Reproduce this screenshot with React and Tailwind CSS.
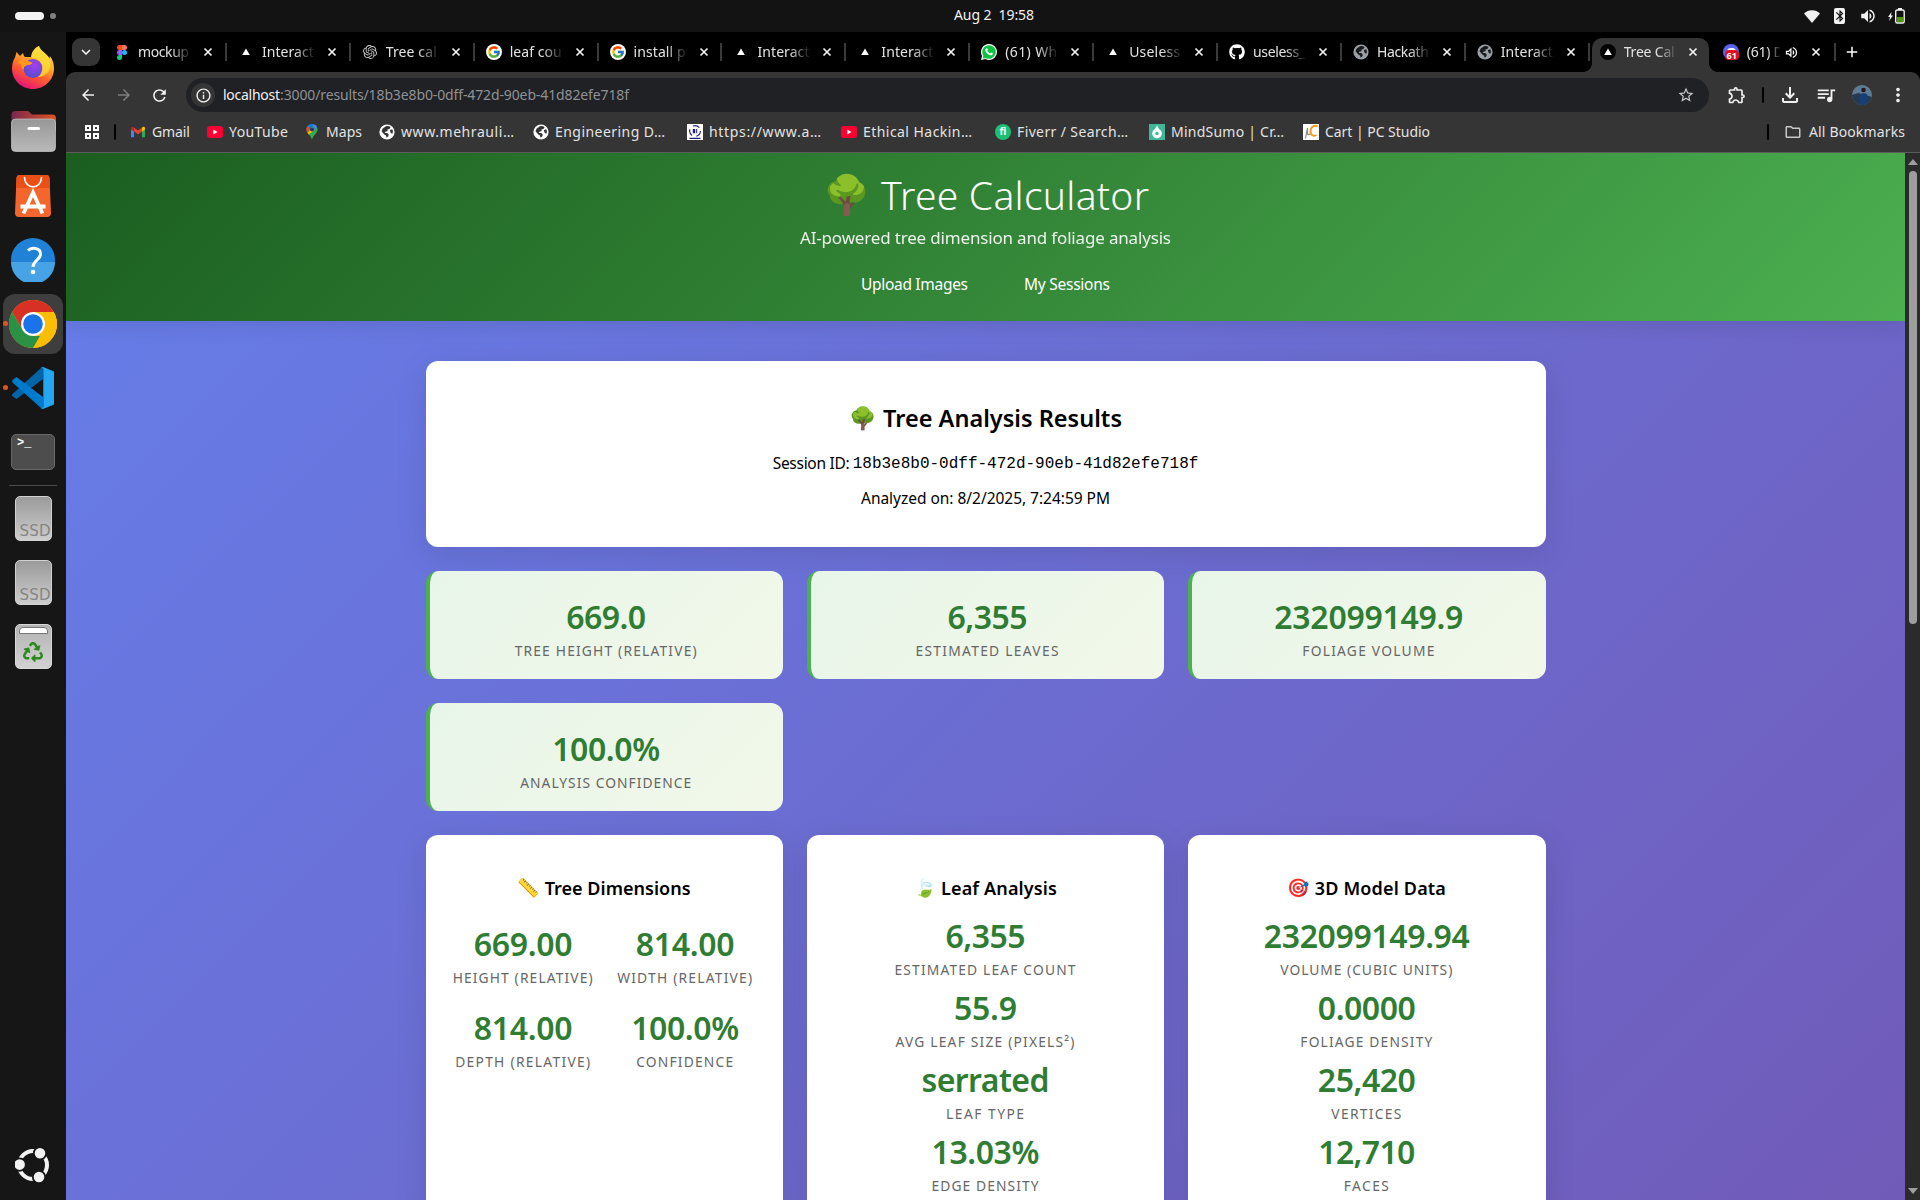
import React, { useLayoutEffect, useRef, useState } from "react";
import { FcGoogle } from "react-icons/fc";
import { FaGithub, FaRecycle } from "react-icons/fa";
import { SiOpenai } from "react-icons/si";
import {
  MdArrowBack,
  MdArrowForward,
  MdRefresh,
  MdInfoOutline,
  MdStarBorder,
  MdOutlineExtension,
  MdOutlineFileDownload,
  MdQueueMusic,
  MdMoreVert,
  MdOutlineFolder,
  MdOutlineVolumeUp,
  MdVolumeUp,
  MdAdd,
  MdKeyboardArrowDown,
  MdBluetooth,
} from "react-icons/md";

/* Text whose tracking is adjusted so that it takes exactly `w` pixels. */
function Fit({ w, className = "", children }) {
  const ref = useRef(null);
  const [sp, setSp] = useState(0);
  useLayoutEffect(() => {
    const n = Array.from(children).length;
    const natural = ref.current.getBoundingClientRect().width - sp * n;
    setSp((w - natural) / Math.max(1, n - 1));
  }, [w, children]);
  return (
    <span ref={ref} className={`inline-block whitespace-pre ${className}`} style={{ letterSpacing: sp, marginRight: -sp }}>
      {children}
    </span>
  );
}

/* ---------- favicons ---------- */
const Figma = () => (
  <svg viewBox="0 0 10 15" className="h-[15px] w-[10px]">
    <path d="M2.5 0H5v5H2.5a2.5 2.5 0 0 1 0-5z" fill="#f24e1e" />
    <path d="M5 0h2.5a2.5 2.5 0 0 1 0 5H5z" fill="#ff7262" />
    <path d="M2.5 5H5v5H2.5a2.5 2.5 0 0 1 0-5z" fill="#a259ff" />
    <circle cx="7.5" cy="7.5" r="2.5" fill="#1abcfe" />
    <path d="M2.5 10H5v2.5A2.5 2.5 0 1 1 2.5 10z" fill="#0acf83" />
  </svg>
);
const Triangle = () => (
  <svg viewBox="0 0 16 16" className="size-4">
    <circle cx="8" cy="8" r="8" fill="#000" />
    <path d="M8 4.4 11.8 11H4.2z" fill="#fff" />
  </svg>
);
const Google = () => (
  <span className="flex size-4 items-center justify-center rounded-full bg-white">
    <FcGoogle className="size-[14px]" />
  </span>
);
const WhatsApp = () => (
  <svg viewBox="0 0 16 16" className="size-4">
    <path d="M8 0a8 8 0 0 1 0 16 8 8 0 0 1-3.7-.9L0 16l1-4.1A8 8 0 0 1 8 0z" fill="#fff" />
    <path d="M8 1.2a6.8 6.8 0 1 1-3.4 12.7l-3 .7.8-2.8A6.8 6.8 0 0 1 8 1.2z" fill="#0dc143" />
    <path d="M5.6 4.2c.5-.2.8 0 1 .6l.4 1c0 .4-.6.8-.6 1 .6 1.300 1.500 2.100 2.700 2.600.4 0 .7-.9 1.100-.8l1.500.7c.3.2.1 1.200-.5 1.700-2.400 1.500-6.800-2-7-5 .1-.9.7-1.600 1.400-1.800z" fill="#fff" />
  </svg>
);
const Globe = ({ fg = "#9aa0a6", bg = "#1b1b1b" }) => (
  <svg viewBox="0 0 16 16" className="size-4">
    <circle cx="8" cy="8" r="7.600" fill={fg} />
    <path d="M7 2.200c1.500-.6 3.300-.3 4.600.7L10.500 5l-2 .5v1.700l-1.800.3-1 1.500 2.500.1 1.500 1.400-.3 1.800-1.800 1.400-.6-2.200-1.700-1-2.800-3.200 1.200-2.800z" fill={bg} />
    <path d="m10.800 6 2.500-.7.700 2.300-.7 2.200-1.500-.7z" fill={bg} />
  </svg>
);
const Discord = () => (
  <span className="relative block size-4 rounded-full bg-[#5865f2]">
    <span className="absolute top-[4px] left-[4px] h-[4px] w-[9px] rounded-t bg-white" />
    <span className="absolute right-0 bottom-0 flex h-[10px] w-[14px] items-center justify-center rounded-[4px] bg-[#e0101f] text-[9px] leading-none font-bold text-white">61</span>
  </span>
);
const Gmail = () => (
  <svg viewBox="0 0 16 12" className="h-3 w-[14px]">
    <path d="M0 1.500V11a1 1 0 0 0 1 1h2.500V4z" fill="#4285f4" />
    <path d="M16 1.500V11a1 1 0 0 1-1 1h-2.500V4z" fill="#34a853" />
    <path d="M12.500 4V.9C14.300-.6 16-.2 16 1.800V3l-3.500 2.600z" fill="#fbbc04" />
    <path d="M3.500 5.300V1L8 4.400 12.500 1v4.300L8 8.700z" fill="#ea4335" />
    <path d="M3.500 1C1.700-.6 0-.2 0 1.800V3l3.500 2.600z" fill="#c5221f" />
  </svg>
);
const YouTube = () => (
  <svg viewBox="0 0 16 12" className="h-3 w-4">
    <rect width="16" height="12" rx="3" fill="#ff0033" />
    <path d="M6.300 3.500 10.500 6 6.300 8.500z" fill="#fff" />
  </svg>
);
const MapsPin = () => (
  <svg viewBox="0 0 12 16" className="h-4 w-4">
    <path d="M6 0a5.600 5.600 0 0 1 5.600 5.600C11.600 9.500 7.500 10.500 6 16 4.500 10.500.4 9.500.4 5.600A5.600 5.600 0 0 1 6 0z" fill="#34a853" />
    <path d="M1.700 2.100 4.500 4.500 1.600 8.800C.8 7.900.4 6.900.4 5.600c0-1.400.5-2.600 1.300-3.500z" fill="#ea4335" />
    <path d="M1.700 2.100A5.600 5.600 0 0 1 7.800.3L4.500 4.500z" fill="#1a73e8" />
    <path d="M7.800.3a5.600 5.600 0 0 1 3.200 2.900L7.500 7z" fill="#4285f4" />
    <path d="m7.500 7-5 3.500L1.600 8.800 4.300 6z" fill="#fbbc04" />
    <circle cx="6" cy="5.500" r="2" fill="#2b3a55" />
  </svg>
);
const BLogo = () => (
  <svg viewBox="0 0 16 16" className="size-4">
    <rect width="16" height="16" fill="#fff" />
    <circle cx="8" cy="7" r="5.400" fill="none" stroke="#2a2a8c" strokeWidth="1.200" strokeDasharray="7 4.300" />
    <path d="M5.800 5h2.400v4.200H5.800zM9.200 5h1v4.200h-1zM2.500 13.800h11V15h-11z" fill="#1d1d7a" />
  </svg>
);
const Fiverr = () => (
  <span className="flex size-4 items-center justify-center rounded-full bg-[#1dbf73] pb-px text-[10px] leading-none font-bold text-white">fi</span>
);
const MindSumo = () => (
  <svg viewBox="0 0 16 16" className="size-4">
    <rect width="16" height="16" fill="#3fb89a" />
    <circle cx="8" cy="9.500" r="4.800" fill="#fff" />
    <path d="M8 1.500 10 5H6z" fill="#fff" />
    <circle cx="8" cy="9.500" r="1.700" fill="#3fb89a" />
  </svg>
);
const Cart = () => (
  <svg viewBox="0 0 16 16" className="size-4">
    <rect width="16" height="16" fill="#fff" />
    <path d="M2.500 14.500 4.500 4v6c1.500 1.500 3 0 3.500-2" fill="none" stroke="#888" strokeWidth="1.200" />
    <path d="M14.500 2.500C11 .3 7 3.500 7.500 8c.3 3.300 3.500 4.500 6 3" fill="none" stroke="#f39a1f" strokeWidth="2" />
  </svg>
);

/* ---------- dock ---------- */
const Firefox = () => (
  <svg viewBox="0 0 42 43" className="-mt-[2px] h-[43px] w-[42px]">
    <defs>
      <linearGradient id="ffa" x1=".8" y1="0" x2=".3" y2="1">
        <stop offset="0" stopColor="#fff14a" />
        <stop offset=".35" stopColor="#ffb329" />
        <stop offset=".65" stopColor="#ff5a30" />
        <stop offset="1" stopColor="#e3107d" />
      </linearGradient>
      <radialGradient id="ffb" cx=".6" cy=".3" r=".8">
        <stop offset="0" stopColor="#a43df0" />
        <stop offset="1" stopColor="#4a50c8" />
      </radialGradient>
    </defs>
    <path d="M27 0c1 5 8 7 10.500 12.500.5-1 .4-2 0-3C41 14 42 18 42 22.500 42 34 32.500 43 21 43S0 34 0 22.500C0 18 1 14.500 3 11.500L4.500 6l3.500 4 3-3c.5 2 1 3 2 4h6c.5-5 3.500-9 8-11z" fill="url(#ffa)" />
    <circle cx="21" cy="22.500" r="9.500" fill="url(#ffb)" />
    <path d="M5.500 16c5-2.500 9-2.500 15 .8-1.500 2.200-3 2.400-5.500 2.400-3 .8-3.500 2.500-3 4.500-2-1-3-3.500-2.500-5.200z" fill="#ff9a1f" />
    <path d="M27 0c-6 4-8 8-7 12 5 0 9 3 10 7 1 5-1 10-4 12 9 0 14-8 12-17C36 9 28 5 27 0z" fill="#ffdf3a" opacity=".75" />
  </svg>
);
const Files = () => (
  <svg viewBox="0 0 45 41" className="-mt-px h-[41px] w-[45px]">
    <defs>
      <linearGradient id="fa">
        <stop offset="0" stopColor="#78284f" />
        <stop offset="1" stopColor="#e2521f" />
      </linearGradient>
      <linearGradient id="fb" x2="0" y2="1">
        <stop offset="0" stopColor="#979797" />
        <stop offset="1" stopColor="#b9b9b9" />
      </linearGradient>
    </defs>
    <path d="M.5 4a4 4 0 0 1 4-4H17l4 3.500h20a4 4 0 0 1 4 4V20H.5z" fill="url(#fa)" />
    <rect x=".5" y="8" width="44" height="32.500" rx="4" fill="url(#fb)" stroke="#c8c8c8" strokeWidth=".7" />
    <rect x="16.500" y="16" width="12.500" height="3" rx="1.500" fill="#fff" />
  </svg>
);
const AppCenter = () => (
  <svg viewBox="0 0 36 42" className="h-[42px] w-[36px]">
    <path d="M5 0h26a3.500 3.500 0 0 1 3.500 3.300L36 38a4 4 0 0 1-4 4H4a4 4 0 0 1-4-4L1.500 3.300A3.500 3.500 0 0 1 5 0z" fill="#f5662c" />
    <path d="M1.500 3.300A3.500 3.500 0 0 1 5 0h26a3.500 3.500 0 0 1 3.500 3.300L35 13H1z" fill="#ea4f16" />
    <path d="M9.500 2.500c.5 12.500 16.500 12.500 17 0" fill="none" stroke="#fff" strokeWidth="1.600" strokeLinecap="round" />
    <path d="M8.500 38.500 18 17.500l9.500 21M5.500 31.500h25" fill="none" stroke="#fff" strokeWidth="3.800" />
  </svg>
);
const Help = () => (
  <svg viewBox="0 0 44 44" className="size-11">
    <circle cx="22" cy="22" r="22" fill="#1f82d6" />
    <path d="M0 24h44a22 22 0 0 1-44 0z" fill="#46a4e6" />
    <path d="M17 12.500c3.500-3.500 12.500-2.800 12.500 3.500 0 6-7.500 6.500-7.500 13" fill="none" stroke="#fff" strokeWidth="3" />
    <circle cx="22" cy="34" r="2.300" fill="#fff" />
  </svg>
);
const Chrome = () => (
  <svg viewBox="0 0 48 48" className="size-12">
    <circle cx="24" cy="24" r="24" fill="#fbbc04" />
    <path d="M24 24 13.600 30 3.200 12A24 24 0 0 1 44.800 12H24z" fill="#d93025" />
    <path d="M3.200 12 13.600 30 24 36h10.400L24 48A24 24 0 0 1 3.200 12z" fill="#2a9145" />
    <path d="M44.800 12A24 24 0 0 1 24 48l10.400-18V12z" fill="#fbbc04" />
    <circle cx="24" cy="24" r="12" fill="#fff" />
    <circle cx="24" cy="24" r="9.800" fill="#1a73e8" />
  </svg>
);
const VSCode = () => (
  <svg viewBox="0 0 42 42" className="size-[42px]">
    <path d="M0 27.500 29 1l2 0v11L4.500 32 0 29z" fill="#0065a9" />
    <path d="M0 14.500 1 12.500 4.500 10 31 30v11h-2L1 16z" fill="#007acc" />
    <path d="M31 0 42 4.500v33L31 42c-1 0-2-.5-2.500-1.200 1 .6 2.800.3 2.800-1.600V2.800c0-1.800-1.700-2.400-2.800-1.600C29 .4 30 0 31 0z" fill="#24a6f2" />
  </svg>
);
const Terminal = () => (
  <span className="block h-9 w-11 rounded-[5px] border border-[#686868] bg-[#4d4d4d] pl-[5px] font-['Liberation_Mono'] text-[12px] leading-[17px] font-bold text-white">&gt;_</span>
);
const Ssd = () => (
  <span className="flex h-[45px] w-[37px] items-end justify-end rounded-[5px] border border-[#d2d2d2] bg-linear-to-b from-[#9b9b9b] to-[#cdcdcd] font-['DejaVu_Sans'] text-[15px] leading-[17px] text-[#858585]">
    <Fit w={31}>SSD</Fit>
  </span>
);
const Trash = () => (
  <span className="flex h-[45px] w-[37px] flex-col items-center rounded-[5px] border border-[#d8d8d8] bg-linear-to-b from-[#b3b3b3] to-[#d2d2d2] pt-[2px]">
    <span className="h-[7px] w-[29px] rounded-t border border-[#777] bg-white" />
    <FaRecycle className="mt-[8px] size-5 text-[#2b8a1c]" />
  </span>
);
const UbuntuLogo = () => (
  <svg viewBox="0 0 36 36" className="size-9">
    <circle cx="18" cy="18" r="14" fill="none" stroke="#f2f2f2" strokeWidth="4" />
    <g fill="#f2f2f2" stroke="#161616" strokeWidth="1.800">
      <circle cx="25" cy="6.200" r="6.200" />
      <circle cx="4.600" cy="17.600" r="6.200" />
      <circle cx="24" cy="30" r="6.200" />
    </g>
  </svg>
);

const DockItem = ({ children, active, running }) => (
  <div className="relative flex h-16 items-center justify-center">
    {running && <span className="absolute top-[29px] left-[3px] z-10 size-[5px] rounded-full bg-[#e25322]" />}
    <div className={active ? "flex size-[60px] items-center justify-center rounded-xl bg-[#3e3e3e]" : "flex"}>{children}</div>
  </div>
);

/* ---------- browser chrome ---------- */
const tabs = [
  ["mockup", <Figma />, 51],
  ["Interact", <Triangle />, 52],
  ["Tree cal", <SiOpenai className="size-[14px] text-[#c8c8c8]" />, 51],
  ["leaf cou", <Google />, 52],
  ["install p", <Google />, 52],
  ["Interact", <Triangle />, 52],
  ["Interact", <Triangle />, 52],
  ["(61) Wh", <WhatsApp />, 52],
  ["Useless", <Triangle />, 51],
  ["useless_", <FaGithub className="size-4 text-white" />, 52],
  ["Hackath", <Globe />, 52],
  ["Interact", <Globe />, 52],
];

const Close = ({ className }) => (
  <svg viewBox="0 0 14 14" className={`size-[14px] ${className}`}>
    <path d="m3.500 3.500 7 7m0-7-7 7" stroke="#f1f1f1" strokeWidth="1.700" fill="none" />
  </svg>
);

const Tab = ({ title, icon, w }) => (
  <div className="flex h-7 w-[123.9px] items-center pl-[11px]">
    <span className="flex w-4 justify-center">{icon}</span>
    <span className="ml-[8px] h-5 w-[54px] overflow-hidden mask-r-from-60% leading-5"><Fit w={w}>{title}</Fit></span>
    <Close className="ml-[9px]" />
    <span className="ml-auto h-[18px] w-[2px] bg-[#3a3a3a]" />
  </div>
);

const bookmarks = [
  ["Gmail", <Gmail />, 38, "w-[77px]"],
  ["YouTube", <YouTube />, 59, "w-[97px]"],
  ["Maps", <MapsPin />, 36, "w-[75px]"],
  ["www.mehrauli…", <Globe fg="#fff" bg="#353535" />, 113, "w-[154px]"],
  ["Engineering D…", <Globe fg="#fff" bg="#353535" />, 110, "w-[154px]"],
  ["https://www.a…", <BLogo />, 112, "w-[154px]"],
  ["Ethical Hackin…", <YouTube />, 109, "w-[154px]"],
  ["Fiverr / Search…", <Fiverr />, 111, "w-[154px]"],
  ["MindSumo | Cr…", <MindSumo />, 113, "w-[154px]"],
  ["Cart | PC Studio", <Cart />, 105, "w-[154px]"],
];

function Browser() {
  return (
    <div className="shrink-0 text-[14px] text-[#e3e3e3]">
      <div className="flex h-10 items-center bg-black pl-[6px]">
        <span className="mr-[3px] flex size-7 items-center justify-center rounded-[9px] bg-[#353535]"><MdKeyboardArrowDown className="size-[18px] text-white" /></span>
        {tabs.map((t, i) => <Tab key={i} title={t[0]} icon={t[1]} w={t[2]} />)}
        <div className="relative mt-[6px] ml-[2px] flex h-[34px] w-[117px] items-center rounded-t-[10px] bg-[#353535] pb-[6px] pl-2">
          <span className="absolute bottom-0 -left-[10px] size-[10px] bg-[radial-gradient(circle_at_0_0,transparent_10px,#353535_10.5px)]" />
          <span className="absolute -right-[10px] bottom-0 size-[10px] bg-[radial-gradient(circle_at_100%_0,transparent_10px,#353535_10.5px)]" />
          <Triangle />
          <span className="ml-[8px] h-5 w-[54px] overflow-hidden mask-r-from-60% leading-5"><Fit w={51}>Tree Cal</Fit></span>
          <Close className="ml-[8px]" />
        </div>
        <div className="flex h-7 items-center pl-[14px]">
          <Discord />
          <span className="ml-[8px] h-5 w-[38px] overflow-hidden mask-r-from-55% mask-r-to-90% leading-5"><Fit w={37}>(61) D</Fit></span>
          <MdOutlineVolumeUp className="-ml-px size-[15px] text-white" />
          <Close className="ml-[10px]" />
          <span className="ml-[11px] h-[18px] w-[2px] bg-[#3a3a3a]" />
          <MdAdd className="ml-[7px] size-[18px] text-white" />
        </div>
      </div>
      <div className="bg-black">
        <div className="flex h-[46px] items-center rounded-t-[9px] bg-[#353535] text-[#f1f1f1]">
          <MdArrowBack className="ml-[13px] size-[18px]" />
          <MdArrowForward className="ml-[18px] size-[18px] text-[#7d7d7d]" />
          <MdRefresh className="ml-[17px] size-[19px]" />
          <div className="ml-[17px] flex h-[34px] w-[1523px] items-center rounded-full bg-[#202124] pl-[5px]">
            <span className="flex size-6 items-center justify-center rounded-full bg-[#353535]"><MdInfoOutline className="size-[17px]" /></span>
            <span className="-mt-[2px] ml-2 flex">
              <Fit w={57}>localhost</Fit>
              <Fit w={349} className="text-[#8f9195]">:3000/results/18b3e8b0-0dff-472d-90eb-41d82efe718f</Fit>
            </span>
            <MdStarBorder className="mr-[14px] ml-auto size-[18px] text-[#c7c7c7]" />
          </div>
          <MdOutlineExtension className="ml-[18px] size-[20px]" />
          <span className="ml-[15px] h-4 w-[2px] rounded bg-black" />
          <MdOutlineFileDownload className="ml-[14px] size-[24px]" />
          <MdQueueMusic className="ml-[13px] size-[22px]" />
          <svg viewBox="0 0 20 20" className="ml-[15px] size-5">
            <defs><clipPath id="av"><circle cx="10" cy="10" r="10" /></clipPath></defs>
            <g clipPath="url(#av)">
              <rect width="20" height="20" fill="#5f7b94" />
              <path d="M0 10 6 8l14 4v8H0z" fill="#26394e" />
              <circle cx="11.500" cy="5" r="2.300" fill="#22191a" />
              <path d="M7.500 20V10c1-2.500 7-2.500 8 0v10z" fill="#173f75" />
            </g>
          </svg>
          <MdMoreVert className="ml-[15px] size-[22px]" />
        </div>
      </div>
      <div className="flex h-[35px] items-center border-b border-[#5c5c5c] bg-[#353535]">
        <div className="flex h-full w-full items-center pb-[7px]">
          <svg viewBox="0 0 16 16" className="ml-[18px] size-4 fill-none stroke-white stroke-2">
            <path d="M2 2h4v4H2zM10 2h4v4h-4zM2 10h4v4H2zM10 10h4v4h-4z" />
          </svg>
          <span className="mr-[14px] ml-[14px] h-4 w-[2px] rounded bg-black" />
          {bookmarks.map((b, i) => (
            <span key={i} className={`flex shrink-0 items-center ${b[3]}`}>
              <span className="mr-[6px] flex w-4 justify-center">{b[1]}</span>
              <span className="-mt-px"><Fit w={b[2]}>{b[0]}</Fit></span>
            </span>
          ))}
          <span className="ml-auto h-4 w-[2px] rounded bg-black" />
          <MdOutlineFolder className="mr-[7px] ml-[15px] size-[18px] text-[#c7c7c7]" />
          <span className="-mt-px mr-[15px]"><Fit w={96}>All Bookmarks</Fit></span>
        </div>
      </div>
    </div>
  );
}

/* ---------- page ---------- */
const Metric = ({ value, vw, label, lw }) => (
  <div className="flex flex-col items-center">
    <div className="h-9 text-[32px] leading-9 font-semibold text-[#2e7d32]"><Fit w={vw + 2}>{value}</Fit></div>
    <div className="mt-[6px] -ml-px h-5 text-[13.800px] leading-5 text-[#666]"><Fit w={lw + 1}>{label}</Fit></div>
  </div>
);

const Stat = (p) => (
  <div className="h-[108px] rounded-xl border-l-4 border-[#4caf50] bg-[linear-gradient(135deg,#e8f5e9,#f1f8e9)] pt-7">
    <Metric {...p} />
  </div>
);

const Panel = ({ emoji, title, w, children }) => (
  <div className="h-[560px] rounded-xl bg-white pt-[39px] shadow-[0_8px_32px_rgba(0,0,0,0.1)]">
    <h3 className="flex h-7 items-center justify-center gap-[5px] text-[18px] font-semibold text-black">
      <span className="w-[22px] text-center font-['Noto_Color_Emoji'] text-[18px] leading-7">{emoji}</span>
      <Fit w={w + 1}>{title}</Fit>
    </h3>
    {children}
  </div>
);

const leaf = [
  ["6,355", 78, "ESTIMATED LEAF COUNT", 180],
  ["55.9", 61, "AVG LEAF SIZE (PIXELS²)", 178],
  ["serrated", 126, "LEAF TYPE", 77],
  ["13.03%", 106, "EDGE DENSITY", 106],
];
const model = [
  ["232099149.94", 204, "VOLUME (CUBIC UNITS)", 171],
  ["0.0000", 96, "FOLIAGE DENSITY", 131],
  ["25,420", 96, "VERTICES", 69],
  ["12,710", 95, "FACES", 44],
];
const MetricList = ({ rows }) => (
  <div className="mt-[16px] flex flex-col gap-[10px]">
    {rows.map((r) => <Metric key={r[2]} value={r[0]} vw={r[1]} label={r[2]} lw={r[3]} />)}
  </div>
);

function Page() {
  return (
    <div className="h-[2362px] bg-[linear-gradient(135deg,#667eea_0%,#764ba2_100%)]">
      <header className="flex h-[168px] flex-col items-center bg-[linear-gradient(135deg,#1b5e20_0%,#2e7d32_40%,#4caf50_100%)] pt-[18px] text-white shadow-[0_4px_20px_rgba(0,0,0,0.1)]">
        <h1 className="ml-[3px] flex h-12 items-center gap-[12px] text-[39px] leading-[48px] font-light">
          <span className="flex w-[44px] justify-center font-['Noto_Color_Emoji'] text-[38px]">🌳</span>
          <Fit w={268}>Tree Calculator</Fit>
        </h1>
        <p className="mt-[7px] h-6 text-[17px] leading-6 font-normal opacity-90"><Fit w={371}>AI-powered tree dimension and foliage analysis</Fit></p>
        <nav className="mt-[22px] flex h-6 gap-[56px] text-[15.500px] leading-6">
          <Fit w={107}>Upload Images</Fit>
          <Fit w={86}>My Sessions</Fit>
        </nav>
      </header>
      <main className="mx-auto mt-10 w-[1120px]">
        <section className="mb-6 flex h-[186px] flex-col items-center rounded-xl bg-white pt-[42px] text-[15.500px] text-black shadow-[0_8px_32px_rgba(0,0,0,0.1)]">
          <h2 className="flex h-8 items-center gap-[8px] text-[23.500px] font-semibold">
            <span className="w-[26px] text-center font-['Noto_Color_Emoji'] text-[22px] leading-8">🌳</span>
            <Fit w={239}>Tree Analysis Results</Fit>
          </h2>
          <p className="mt-4 flex h-6 items-center gap-[3px] leading-6">
            <Fit w={77}>Session ID:</Fit>
            <span className="pt-px font-['Liberation_Mono'] text-[16px]">18b3e8b0-0dff-472d-90eb-41d82efe718f</span>
          </p>
          <p className="mt-[11px] h-6 leading-6"><Fit w={249}>Analyzed on: 8/2/2025, 7:24:59 PM</Fit></p>
        </section>
        <section className="mb-6 grid grid-cols-3 gap-6">
          <Stat value="669.0" vw={78} label="TREE HEIGHT (RELATIVE)" lw={181} />
          <Stat value="6,355" vw={78} label="ESTIMATED LEAVES" lw={142} />
          <Stat value="232099149.9" vw={187} label="FOLIAGE VOLUME" lw={131} />
          <Stat value="100.0%" vw={106} label="ANALYSIS CONFIDENCE" lw={170} />
        </section>
        <section className="grid grid-cols-3 gap-6">
          <Panel emoji="📏" title="Tree Dimensions" w={145}>
            <div className="-ml-[2px] mt-6 grid grid-cols-[139px_135px] justify-center gap-x-[25px] gap-y-[22px]">
              <Metric value="669.00" vw={97} label="HEIGHT (RELATIVE)" lw={139} />
              <Metric value="814.00" vw={97} label="WIDTH (RELATIVE)" lw={134} />
              <Metric value="814.00" vw={97} label="DEPTH (RELATIVE)" lw={134} />
              <Metric value="100.0%" vw={106} label="CONFIDENCE" lw={96} />
            </div>
          </Panel>
          <Panel emoji="🍃" title="Leaf Analysis" w={115}><MetricList rows={leaf} /></Panel>
          <Panel emoji="🎯" title="3D Model Data" w={130}><MetricList rows={model} /></Panel>
        </section>
      </main>
    </div>
  );
}

export default function App() {
  return (
    <div className="flex h-[1200px] w-[1920px] flex-col overflow-hidden bg-[#131313] font-['Noto_Sans','Open_Sans',sans-serif]">
      <div className="flex h-8 shrink-0 items-center bg-[#131313] text-[14px] text-[#f2f2f2]">
        <div className="flex w-[954px] items-center gap-[6px] pl-[15px]">
          <span className="h-2 w-[29px] rounded-full bg-[#f2f2f2]" />
          <span className="size-[6px] rounded-full bg-[#808080]" />
        </div>
        <div className="-mt-[3px]"><Fit w={80}>Aug 2  19:58</Fit></div>
        <div className="ml-auto flex items-center pr-[15px]">
          <svg viewBox="0 0 16 13" className="h-[13px] w-4"><path d="M0 3.500C4-1 12-1 16 3.500L8 13z" fill="#f2f2f2" /></svg>
          <span className="ml-[14px] flex h-4 w-[11px] items-center justify-center rounded-[2px] bg-[#f2f2f2]"><MdBluetooth className="size-[14px] shrink-0 text-[#131313]" /></span>
          <MdVolumeUp className="ml-[14px] size-[18px]" />
          <svg viewBox="0 0 17 16" className="ml-[11px] h-4 w-[17px]">
            <path d="M3.500 4 0 9h2L1 13l4-5.500H3z" fill="#f2f2f2" />
            <rect x="7.700" y="2" width="8.500" height="13" rx="1.500" fill="none" stroke="#f2f2f2" strokeWidth="1.400" />
            <rect x="10" y="0" width="4" height="2" fill="#f2f2f2" />
            <rect x="9" y="9" width="6" height="5" fill="#4e9a06" />
          </svg>
        </div>
      </div>
      <div className="flex min-h-0 flex-1">
        <aside className="flex w-[66px] shrink-0 flex-col bg-[#161616] pt-1">
          <DockItem><Firefox /></DockItem>
          <DockItem><Files /></DockItem>
          <DockItem><AppCenter /></DockItem>
          <DockItem><Help /></DockItem>
          <DockItem active running><Chrome /></DockItem>
          <DockItem running><VSCode /></DockItem>
          <DockItem><Terminal /></DockItem>
          <span className="mx-[9px] mt-px h-px shrink-0 bg-[#4a4a4a]" />
          <DockItem><Ssd /></DockItem>
          <DockItem><Ssd /></DockItem>
          <DockItem><Trash /></DockItem>
          <div className="mt-auto mb-[17px] flex justify-center"><UbuntuLogo /></div>
        </aside>
        <div className="flex min-w-0 flex-1 flex-col">
          <Browser />
          <div className="flex min-h-0 flex-1 overflow-hidden">
            <div className="h-full flex-1 overflow-hidden"><Page /></div>
            <div className="flex w-[15px] flex-col items-center bg-[#2b2b2b] py-[6px]">
              <svg viewBox="0 0 10 6" className="h-[6px] w-[10px]"><path d="M5 0l5 6H0z" fill="#9e9e9e" /></svg>
              <span className="mt-[6px] h-[453px] w-2 rounded-full bg-[#9e9e9e]" />
              <svg viewBox="0 0 10 6" className="mt-auto h-[6px] w-[10px]"><path d="M0 0h10L5 6z" fill="#9e9e9e" /></svg>
            </div>
          </div>
        </div>
      </div>
    </div>
  );
}
